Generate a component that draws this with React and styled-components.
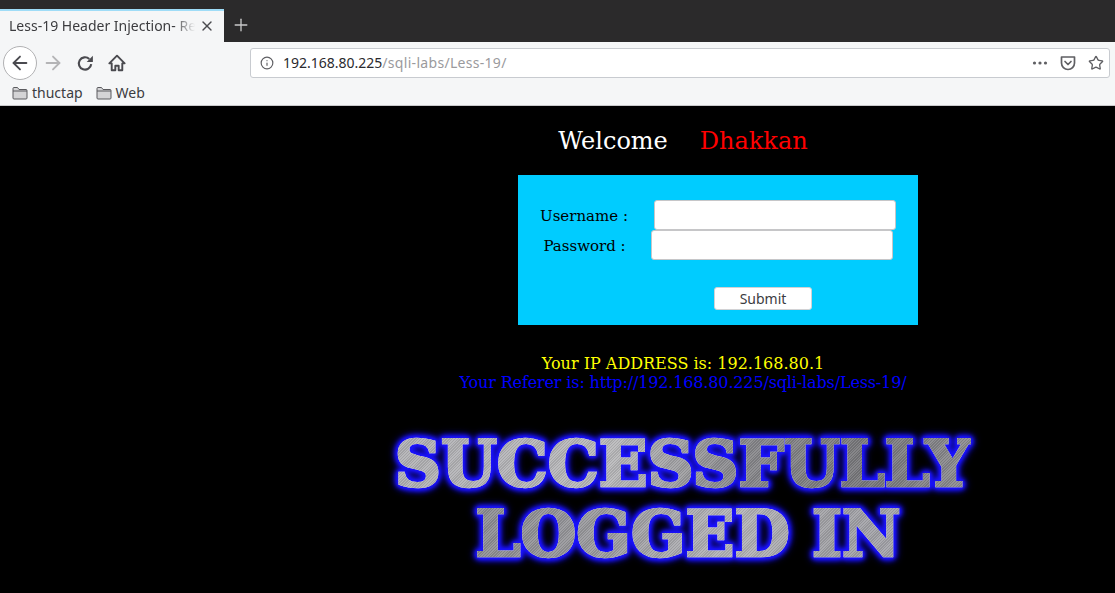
import styled, { createGlobalStyle } from "styled-components";
import { ArrowLeft, ArrowRight, Info, Star, Plus, X } from "lucide-react";

const GlobalStyle = createGlobalStyle`
  html, body { margin: 0; padding: 0; background: #000; overflow: hidden; }
  * { box-sizing: border-box; }
`;

const Browser = styled.div`
  width: 1115px;
  height: 593px;
  display: flex;
  flex-direction: column;
  background: #000;
  font-family: "Noto Sans", "Open Sans", sans-serif;
`;

const TabStrip = styled.div`
  height: 42px;
  flex: none;
  display: flex;
  align-items: flex-end;
  background: #2b2a2b;
`;

const Tab = styled.div`
  width: 224px;
  height: 33px;
  display: flex;
  align-items: center;
  padding: 0 0 2px 9px;
  background: #f5f6f7;
  border-top: 2px solid #9fdcf7;
  color: #3c3c3f;
  font-size: 14px;
`;

const TabTitle = styled.span`
  width: 186px;
  white-space: nowrap;
  -webkit-mask-image: linear-gradient(to right, #000 165px, transparent 186px);
  mask-image: linear-gradient(to right, #000 165px, transparent 186px);
`;

const TabClose = styled.span`
  display: flex;
  margin-left: 4px;
  color: #4a4a4f;
`;

const NewTab = styled.span`
  display: flex;
  margin: 0 0 7px 7px;
  color: #c9c9ca;
`;

const Toolbar = styled.div`
  height: 39px;
  flex: none;
  display: flex;
  align-items: center;
  padding: 2px 5px 0 3px;
  background: #f5f6f7;
`;

const BackButton = styled.span`
  width: 34px;
  height: 34px;
  flex: none;
  display: flex;
  align-items: center;
  justify-content: center;
  background: #fff;
  border: 1px solid #b1b1b3;
  border-radius: 50%;
  color: #4a4a4f;
`;

const NavButton = styled.span`
  width: 32px;
  flex: none;
  display: flex;
  justify-content: center;
  color: ${(p) => (p.$disabled ? "#b4b4b6" : "#4a4a4f")};
`;

const UrlBar = styled.div`
  width: 860px;
  height: 30px;
  margin-left: 117px;
  display: flex;
  align-items: center;
  padding: 0 5px 0 9px;
  background: #fff;
  border: 1px solid #c8cbd0;
  border-radius: 3px;
  font-size: 14px;
`;

const UrlText = styled.span`
  flex: 1;
  margin-left: 9px;
  color: #9a9a9d;
  white-space: nowrap;
  letter-spacing: 0.3px;
`;

const UrlHost = styled.span`
  color: #2a2a2e;
  letter-spacing: 0;
`;

const UrlAction = styled.span`
  display: flex;
  margin-left: 12px;
  color: #5f5f63;
`;

const BookmarkBar = styled.div`
  height: 25px;
  flex: none;
  display: flex;
  align-items: center;
  gap: 13px;
  padding: 0 0 1px 12px;
  background: #f5f6f7;
  border-bottom: 1px solid #c9c9cb;
`;

const Bookmark = styled.span`
  display: flex;
  align-items: center;
  gap: 4px;
  color: #3c3c3f;
  font-size: 14px;
`;

const Page = styled.main`
  flex: 1;
  display: flex;
  flex-direction: column;
  align-items: center;
  padding-left: 251px;
  background: #000;
  font-family: "DejaVu Serif", serif;
`;

const Welcome = styled.div`
  display: flex;
  gap: 32px;
  margin-top: 21px;
  margin-bottom: 19px;
  font-size: 24px;
  line-height: 29px;
`;

const WelcomeWord = styled.span`
  color: ${(p) => p.color};
`;

const LoginBox = styled.form`
  width: 400px;
  height: 150px;
  margin-left: 70px;
  padding-top: 25px;
  flex: none;
  background: #00ccff;
`;

const Row = styled.label`
  height: 30px;
  display: flex;
  align-items: center;
  justify-content: center;
  gap: ${(p) => p.$gap}px;
  color: #000;
  font-size: 15px;
`;

const RowLabel = styled.span`
  padding-top: 2px;
`;

const Field = styled.input`
  width: 242px;
  height: 30px;
  padding: 0 6px;
  background: #fff;
  border: 1px solid #c6c6c8;
  border-radius: 3px;
`;

const Submit = styled.button`
  display: block;
  width: 98px;
  height: 23px;
  margin: 27px 0 0 196px;
  padding: 0;
  background: #fff;
  border: 1px solid #d2d2d4;
  border-radius: 3px;
  color: #3c3c3f;
  font-family: "Noto Sans", sans-serif;
  font-size: 14px;
`;

const InfoLine = styled.div`
  font-size: 16px;
  line-height: 19px;
  color: ${(p) => p.color};
  margin-top: ${(p) => p.$top || 0}px;
  letter-spacing: ${(p) => p.$spacing || 0}px;
`;

// Stands in for the image banner: brushed metal clipped to the letters, blue glow around them
const Banner = styled.div`
  margin-top: 37px;
  text-align: center;
  font-size: 64px;
  font-weight: 700;
  line-height: 70px;
  white-space: nowrap;
  filter: drop-shadow(0 0 0.6px #f0f0ff) drop-shadow(0 0 1.5px #1a12ff) drop-shadow(0 0 2px #1a12ff)
    drop-shadow(0 0 2px #1a12ff) drop-shadow(0 0 3px #1a12ff);
`;

const BannerLine = styled.div`
  margin-left: ${(p) => p.$shift || 0}px;
  color: transparent;
  -webkit-text-stroke: 2.5px transparent;
  background-color: #9b9b9f;
  background-image:
    repeating-linear-gradient(135deg, rgba(255, 255, 255, 0.1) 0 1px, rgba(0, 0, 0, 0.08) 1px 2px),
    linear-gradient(100deg, ${(p) => p.$metal});
  -webkit-background-clip: text;
  background-clip: text;
`;

const FolderIcon = () => (
  <svg width="16" height="14" viewBox="0 0 16 14" fill="#d4d4d6" stroke="#5a5a5e" strokeWidth="1">
    <path d="M1 12V2.5A1 1 0 0 1 2 1.5h3.5l1.5 2h7a1 1 0 0 1 1 1V12a1 1 0 0 1-1 1H2a1 1 0 0 1-1-1z" />
    <path d="M1 5h14" fill="none" />
  </svg>
);

const PocketIcon = () => (
  <svg width="16" height="16" viewBox="0 0 16 16" fill="none" stroke="currentColor" strokeWidth="1.7" strokeLinecap="round" strokeLinejoin="round">
    <path d="M1.5 2h13v6a6.5 6.5 0 0 1-13 0z" />
    <path d="M5 6.5l3 3 3-3" />
  </svg>
);

const Dots = () => (
  <svg width="16" height="16" viewBox="0 0 16 16" fill="currentColor">
    <circle cx="2.5" cy="8" r="1.6" />
    <circle cx="8" cy="8" r="1.6" />
    <circle cx="13.5" cy="8" r="1.6" />
  </svg>
);

const ReloadIcon = () => (
  <svg width="18" height="18" viewBox="0 0 16 16" fill="none" stroke="currentColor" strokeWidth="1.9">
    <path d="M13.5 9a5.5 5.5 0 1 1-1.7-4.6" />
    <path d="M15 1.5v5.5H9.5z" fill="currentColor" stroke="none" />
  </svg>
);

const HomeIcon = () => (
  <svg width="18" height="18" viewBox="0 0 16 16" fill="none" stroke="currentColor" strokeWidth="1.7" strokeLinejoin="round">
    <path d="M8 1.5L1.2 8.3h2.1v6.2h3.2v-4h3v4h3.2V8.3h2.1z" />
  </svg>
);

export default function App() {
  return (
    <Browser>
      <GlobalStyle />
      <TabStrip>
        <Tab>
          <TabTitle>Less-19 Header Injection- Re</TabTitle>
          <TabClose><X size={16} strokeWidth={2} /></TabClose>
        </Tab>
        <NewTab><Plus size={20} strokeWidth={1.6} /></NewTab>
      </TabStrip>

      <Toolbar>
        <BackButton><ArrowLeft size={22} strokeWidth={2} /></BackButton>
        <NavButton $disabled><ArrowRight size={22} strokeWidth={2} /></NavButton>
        <NavButton><ReloadIcon /></NavButton>
        <NavButton><HomeIcon /></NavButton>
        <UrlBar>
          <Info size={14} color="#5f5f63" />
          <UrlText><UrlHost>192.168.80.225</UrlHost>/sqli-labs/Less-19/</UrlText>
          <UrlAction><Dots /></UrlAction>
          <UrlAction><PocketIcon /></UrlAction>
          <UrlAction><Star size={16} strokeWidth={2} /></UrlAction>
        </UrlBar>
      </Toolbar>

      <BookmarkBar>
        <Bookmark><FolderIcon />thuctap</Bookmark>
        <Bookmark><FolderIcon />Web</Bookmark>
      </BookmarkBar>

      <Page>
        <Welcome>
          <WelcomeWord color="#fff">Welcome</WelcomeWord>
          <WelcomeWord color="#ff0000">Dhakkan</WelcomeWord>
        </Welcome>
        <LoginBox onSubmit={(e) => e.preventDefault()}>
          <Row $gap={26}><RowLabel>Username :</RowLabel><Field type="text" name="uname" /></Row>
          <Row $gap={25}><RowLabel>Password :</RowLabel><Field type="password" name="passwd" /></Row>
          <Submit type="submit">Submit</Submit>
        </LoginBox>
        <InfoLine color="#ffff00" $top={29}>Your IP ADDRESS is: 192.168.80.1</InfoLine>
        <InfoLine color="#0000ff" $spacing={-0.14}>Your Referer is: http://192.168.80.225/sqli-labs/Less-19/</InfoLine>
        <Banner>
          <BannerLine $metal="#b0b0b4 0%, #b8b8ba 38%, #87878b 60%, #77777a 82%, #8e8e92 100%">SUCCESSFULLY</BannerLine>
          <BannerLine $shift={10} $metal="#85858a 0%, #96969a 30%, #b4b4b8 58%, #a0a0a4 75%, #a8a8b2 100%">LOGGED IN</BannerLine>
        </Banner>
      </Page>
    </Browser>
  );
}
